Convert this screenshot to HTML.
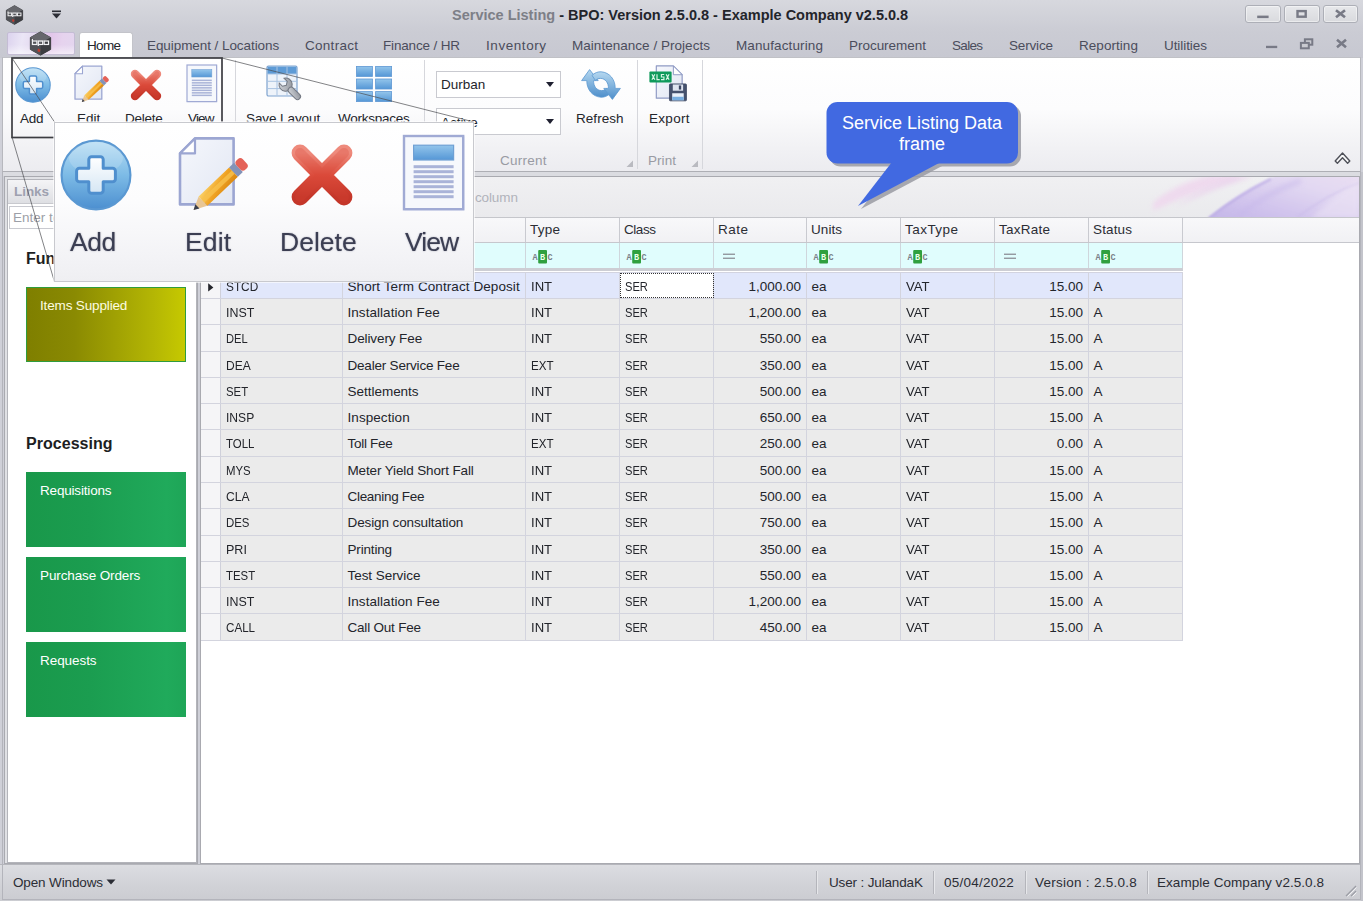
<!DOCTYPE html>
<html><head><meta charset="utf-8"><title>Service Listing</title>
<style>
*{box-sizing:border-box;margin:0;padding:0}
html,body{width:1363px;height:901px;overflow:hidden}
body{font-family:"Liberation Sans",sans-serif;font-size:13px;color:#23252b;background:#cfd0d8;position:relative}
.abs,.t{position:absolute}
.t{white-space:nowrap;line-height:16px}
svg{position:absolute;overflow:visible}
#title{left:0;top:0;width:1363px;height:31px;background:linear-gradient(#d7d8de,#cbccd4)}
#ttext{left:452px;top:6.5px;font-weight:bold;font-size:14.5px;color:#23252b}
#ttext span{color:#7d7f87}
.wbtn{top:5px;height:18px;border:1px solid #adafb7;border-radius:3px;background:linear-gradient(#e7e8eb,#d9dade);box-shadow:inset 0 0 0 1px rgba(255,255,255,.45)}
#tabs{left:0;top:31px;width:1363px;height:27px;background:linear-gradient(#cbccd4,#c7c8d1)}
.tab{top:38px;color:#4b4d5c;font-size:13.5px}
#appbtn{left:7px;top:32px;width:68px;height:23px;border:1px solid #c4bcd4;border-radius:2px;background:linear-gradient(#ffffff00 55%,#ffffff88 100%),linear-gradient(100deg,#dcd3ee 0%,#ebe6f6 22%,#e4d9f0 40%,#e2c6ea 62%,#e6d3ee 80%,#e4d6ef 100%)}
#hometab{left:79px;top:32px;width:54px;height:27px;background:#fff;border-radius:3px 3px 0 0;border:1px solid #c3c4ca;border-bottom:none}
#ribbon{left:2px;top:57px;width:1359px;height:115px;background:linear-gradient(#ffffff 0%,#fcfcfd 45%,#f1f1f4 80%,#ececf0 100%);border:1px solid #b7b8be;border-top-color:#c0c1c6;border-bottom:1px solid #aeafb5;box-shadow:0 1px 0 #c3c4c9}
.sep{top:60px;width:1px;height:109px;background:#d6d7dc}
.rl{top:111px;color:#23252b;font-size:13.5px}
.gl{top:153px;color:#999ba3;font-size:13.5px}
.combo{left:436px;width:125px;height:27px;background:#fff;border:1px solid #c9cad0}
.combo b{position:absolute;right:6px;top:10px;border:4.5px solid transparent;border-top:5px solid #1f2030;border-bottom:none;width:0;height:0}
#leftp{left:4px;top:176px;width:194px;height:688px;border:1px solid #a9aab0;background:#e0e1e5}
#leftin{left:7px;top:179px;width:190px;height:684px;background:#fff;border:1px solid #b3b4ba}
#linkshd{left:8px;top:180px;width:188px;height:24px;background:linear-gradient(#f4f4f6,#dedfe3);border-bottom:1px solid #c8c9ce}
#search{left:9px;top:206px;width:186px;height:23px;border:1px solid #c9cad0;background:#fff}
.hd{font-weight:bold;font-size:16px;color:#1d1e22;left:26px}
.tile{left:26px;width:160px;height:75px;color:#fff}
.tile .t{color:#fff}
.green{background:linear-gradient(90deg,#19984a 0%,#1b9d50 40%,#20aa5b 88%,#1ea557 100%)}
.olive{background:linear-gradient(90deg,#7f7f00 0%,#8a8a02 30%,#b4b604 80%,#c6c900 100%);border:1px solid #2f9c3c}
#mainp{left:200px;top:176px;width:1160px;height:688px;background:#fff;border:1px solid #a9aab0}
#gpanel{left:201px;top:177px;width:1158px;height:41px;background:linear-gradient(#f0f0f2,#eaeaed);border-bottom:1px solid #c5c6cb;overflow:hidden}
#ghead{left:201px;top:218px;width:1158px;height:25px;background:linear-gradient(#f8f8fa,#f1f1f4);border-bottom:1px solid #c6c7cd}
.hsep{top:218px;width:1px;height:24px;background:#c9cad0}
.ht{top:221.5px;color:#2b2d35;font-size:13.5px}
#gfilt{left:201px;top:243px;width:982px;height:28px;background:#e0fdfd;border-bottom:3px solid #cdced4;border-right:1px solid #cfd0d6}
.fsep{top:243px;width:1px;height:25px;background:#cfd6dc}
#grid{position:absolute;left:0;top:0}
.row{position:absolute;left:201px;width:982px;background:#ebebeb;border-bottom:1px solid #d3d4de}
.row:before{content:"";position:absolute;left:0;top:0;width:19px;height:100%;background:#f5f5f7;border-right:1px solid #cfd0da}
.row.sel{background:#e1e7fb;border-top:1px solid #d2d3df}
.row.sel:before{background:#f5f5f7}
.c{position:absolute;top:0;bottom:0;padding:5.5px 0 0 4.5px;border-right:1px solid #d3d4de;white-space:nowrap;line-height:16px;font-size:13.5px;color:#23252b;margin-left:-201px;overflow:hidden}
.c.num{text-align:right;padding-right:5px}
.c.focus{background:#fff;outline:1px dotted #333;outline-offset:-1px}
#status{left:0;top:864px;width:1363px;height:37px;background:linear-gradient(#dcdde1 0%,#d2d3d8 50%,#cbccd1 100%);border-top:1px solid #b5b6bc}
.st{top:874.5px;color:#2b2d35;font-size:13.5px}
.ssep{top:871px;width:1px;height:23px;background:#b4b5bb;box-shadow:1px 0 0 #e6e7ea}
.pl{top:226px;font-size:26.5px;line-height:32px;color:#3b3e52;text-shadow:0 0 1.5px rgba(60,62,90,.55)}
.c i{display:inline-block;font-style:normal;transform-origin:0 50%}
#frameL{left:2px;top:172px;width:1px;height:728px;background:#b3b4bb}
#frameB{left:3px;top:899px;width:1358px;height:1px;background:#b3b4bb}
#frameR{left:1360px;top:172px;width:1px;height:728px;background:#b3b4bb}
#gap1{left:3px;top:172px;width:1357px;height:4px;background:#dbdce1}
#stripR{left:1361px;top:172px;width:2px;height:729px;background:#c3c4cb}

</style></head><body>
<svg width="0" height="0" style="position:absolute">
<defs>
<linearGradient id="gAdd" x1="0" y1="0" x2="0" y2="1"><stop offset="0" stop-color="#b9def4"/><stop offset="0.5" stop-color="#7dbbe6"/><stop offset="1" stop-color="#4c8fd0"/></linearGradient>
<linearGradient id="gPlus" x1="0" y1="0" x2="0" y2="1"><stop offset="0" stop-color="#ffffff"/><stop offset="1" stop-color="#d5e6f4"/></linearGradient>
<linearGradient id="gDel" x1="0" y1="0" x2="0" y2="1"><stop offset="0" stop-color="#ee8a7c"/><stop offset="0.5" stop-color="#dc4c3c"/><stop offset="1" stop-color="#c43629"/></linearGradient>
<linearGradient id="gPage" x1="0" y1="0" x2="1" y2="1"><stop offset="0" stop-color="#f5f7fc"/><stop offset="1" stop-color="#e2e7f3"/></linearGradient>
<linearGradient id="gPen" x1="0" y1="0" x2="1" y2="1"><stop offset="0" stop-color="#fbd36a"/><stop offset="0.5" stop-color="#f0a324"/><stop offset="1" stop-color="#d9860f"/></linearGradient>
<linearGradient id="gBlue" x1="0" y1="0" x2="0" y2="1"><stop offset="0" stop-color="#93c5eb"/><stop offset="1" stop-color="#5597d6"/></linearGradient>
<linearGradient id="gRef" x1="0" y1="0" x2="0" y2="1"><stop offset="0" stop-color="#b5d8f0"/><stop offset="1" stop-color="#4f8fcb"/></linearGradient>
<linearGradient id="gWr" x1="0" y1="0" x2="1" y2="1"><stop offset="0" stop-color="#d5d8dd"/><stop offset="1" stop-color="#8d9199"/></linearGradient>
<symbol id="iAdd" viewBox="0 0 40 40">
 <circle cx="20" cy="20" r="17.2" fill="url(#gAdd)" stroke="#5a98d2" stroke-width="1.1"/>
 <ellipse cx="20" cy="11.5" rx="13.5" ry="8" fill="#ffffff" opacity=".16"/>
 <path d="M17.8 10.9h4.4a1.4 1.4 0 0 1 1.4 1.4v4.3h4.7a1.4 1.4 0 0 1 1.4 1.4v4a1.4 1.4 0 0 1-1.4 1.4h-4.7v4.3a1.4 1.4 0 0 1-1.4 1.4h-4.4a1.4 1.4 0 0 1-1.4-1.4v-4.3h-4.7a1.4 1.4 0 0 1-1.4-1.4v-4a1.4 1.4 0 0 1 1.4-1.4h4.7v-4.3a1.4 1.4 0 0 1 1.4-1.4z" fill="url(#gPlus)" stroke="#4f8fce" stroke-width="1.5" stroke-linejoin="round"/>
</symbol>
<symbol id="iEdit" viewBox="0 0 40 40">
 <path d="M11.5 2.2H30.8V35.2H4V9.7z" fill="url(#gPage)" stroke="#9ca6d2" stroke-width="1.3" stroke-linejoin="round"/>
 <path d="M11.5 2.2V9.7H4z" fill="#fff" stroke="#9ca6d2" stroke-width="1.1" stroke-linejoin="round"/>
 <g transform="translate(10.8 38) rotate(-43.5)">
  <path d="M0 0L6.5 -3.2V3.2z" fill="#e9c694"/>
  <path d="M0 0L2.6 -1.5V1.5z" fill="#3b3f4c"/>
  <rect x="6.5" y="-3.2" width="21" height="6.4" fill="url(#gPen)"/>
  <rect x="6.5" y="-1.2" width="21" height="2.2" fill="#f7c24e" opacity=".8"/>
  <rect x="27.5" y="-3.2" width="3.4" height="6.4" fill="#8393b8"/>
  <rect x="30.9" y="-3.2" width="4.4" height="6.4" rx="1.8" fill="#e46258"/>
 </g>
</symbol>
<symbol id="iDel" viewBox="0 0 40 40">
 <path d="M9 9L31 31M31 9L9 31" stroke="url(#gDel)" stroke-width="8.4" stroke-linecap="round" fill="none"/>
 <path d="M9 9L31 31M31 9L9 31" stroke="#d84434" stroke-width="5" stroke-linecap="round" fill="none" opacity=".25"/>
</symbol>
<symbol id="iView" viewBox="0 0 40 40">
 <rect x="5.2" y="1.2" width="30" height="37" fill="#b5bddc" opacity=".5"/>
 <rect x="5" y="1" width="29.6" height="36.6" fill="#f6f8fc" stroke="#a0aad4" stroke-width="1.2"/>
 <rect x="9.8" y="5.6" width="20" height="7.4" fill="url(#gBlue)" stroke="#6fa0d4" stroke-width=".6"/>
 <g fill="#a9b3d8">
  <rect x="9.8" y="15.6" width="20" height="1.5"/><rect x="9.8" y="18.1" width="20" height="1.5"/>
  <rect x="9.8" y="20.6" width="20" height="1.5"/><rect x="9.8" y="23.1" width="20" height="1.5"/>
  <rect x="9.8" y="25.6" width="20" height="1.5"/><rect x="9.8" y="28.1" width="20" height="1.5"/>
  <rect x="9.8" y="30.6" width="20" height="1.5"/>
 </g>
</symbol>
<symbol id="iSave" viewBox="0 0 40 40">
 <rect x="2" y="2" width="30" height="30" rx="1.5" fill="#eef3fa" stroke="#7ea3cf" stroke-width="1.2"/>
 <rect x="2.6" y="2.6" width="28.8" height="7.4" fill="#5e9bd6"/>
 <path d="M12 2.6V31.4M22 2.6V31.4M2.6 10H31.4M2.6 17.3H31.4M2.6 24.6H31.4" stroke="#a9c3e2" stroke-width="1"/>
 <g transform="translate(20.5 20.5) rotate(-45)">
  <path d="M-3.4 -5.5a6.6 6.6 0 1 0 6.8 0v4.6l-3.4 2l-3.4-2z" fill="url(#gWr)" stroke="#747983" stroke-width="1"/>
  <rect x="-3" y="5" width="6" height="15" rx="3" fill="url(#gWr)" stroke="#747983" stroke-width="1"/>
 </g>
</symbol>
<symbol id="iWork" viewBox="0 0 40 40">
 <g fill="url(#gBlue)" stroke="#5f98d4" stroke-width=".8">
  <rect x="2.4" y="2.4" width="16" height="10"/><rect x="21.6" y="2.4" width="16" height="10"/>
  <rect x="2.4" y="15" width="16" height="10"/><rect x="21.6" y="15" width="16" height="10"/>
  <rect x="2.4" y="27.6" width="16" height="10"/><rect x="21.6" y="27.6" width="16" height="10"/>
 </g>
</symbol>
<symbol id="iRef" viewBox="0 0 40 31">
 <g fill="url(#gRef)" stroke="#5c98d0" stroke-width=".8" stroke-linejoin="round">
  <path d="M8.6 0.6L17.2 11.6H12.6C12.4 17.2 15.6 21.4 20.4 21.6C22.6 21.6 24.4 20.8 25.6 19.6L29 24.6C26.4 27.2 23.2 28.4 19.8 28.2C11.4 27.6 5.6 20.4 5.8 11.6H0.6z"/>
  <path d="M31.4 30.4L22.8 19.4H27.4C27.6 13.8 24.4 9.6 19.6 9.4C17.4 9.4 15.6 10.2 14.4 11.4L11 6.4C13.6 3.8 16.8 2.6 20.2 2.8C28.6 3.4 34.4 10.6 34.2 19.4H39.4z"/>
 </g>
</symbol>
<symbol id="iExp" viewBox="0 0 40 40">
 <path d="M7.5 2H25L34 11V35H7.5z" fill="url(#gPage)" stroke="#8f9ac4" stroke-width="1.2" stroke-linejoin="round"/>
 <path d="M25 2V11H34z" fill="#fff" stroke="#8f9ac4" stroke-width="1" stroke-linejoin="round"/>
 <rect x="0.4" y="7.6" width="22.8" height="11.4" rx="1" fill="#0f9a5b"/>
 <path d="M3 10.5l3 5.6M6 10.5l-3 5.6M8.2 10.5v5.6h2.8M15.6 10.8h-2.9v2.5h2.6v2.8h-3M17.6 10.5l3 5.6M20.600000000000001 10.5l-3 5.6" stroke="#d9f5e6" stroke-width="1.2" fill="none"/>
 <rect x="21" y="20.4" width="17.4" height="17.4" rx="1" fill="#46526e" stroke="#39445f" stroke-width=".8"/>
 <rect x="24.4" y="21" width="10.6" height="6.4" fill="#dfe5f0"/>
 <rect x="30.6" y="22" width="2.4" height="4.2" fill="#3a4560"/>
 <rect x="23.8" y="30" width="11.8" height="7.2" fill="#eaf1fa"/>
 <rect x="23.8" y="33.6" width="11.8" height="3.6" fill="#78aee0"/>
</symbol>
<symbol id="iHex" viewBox="0 0 24 26">
 <path d="M12 0.8L22.6 6.8V19.2L12 25.2L1.4 19.2V6.8z" fill="#47484c" stroke="#3a3b3f" stroke-width=".8"/>
 <path d="M12 0.8L22.6 6.8L12 12.8L1.4 6.8z" fill="#66676c"/>
 <path d="M22.6 6.8V19.2L12 25.2V12.8z" fill="#3c3d41"/>
 <path d="M1.4 6.8L12 12.8V25.2L1.4 19.2z" fill="#515257"/>
 <g fill="none" stroke="#f2f2f4" stroke-width="1.3"><rect x="3.6" y="10.4" width="4.6" height="3.6"/><path d="M3.6 10.4V8.2"/><rect x="9.7" y="10.4" width="4.6" height="3.6"/><path d="M9.7 14V15.6"/><rect x="15.8" y="10.4" width="4.6" height="3.6"/></g>
 <path d="M9.4 18.2l2.6 1.2l-1 2.6l-2.200000000000001-1z" fill="#c23a30"/>
</symbol>
</defs>
</svg>
<!-- title bar -->
<div id="title" class="abs"></div>
<svg style="left:5px;top:4.5px" width="19" height="20"><use href="#iHex" width="19" height="20"/></svg>
<svg style="left:51px;top:10px" width="11" height="9"><rect x="1" y="0.5" width="9" height="1.6" fill="#2b2d35"/><path d="M1 3.6h9L5.5 8.4z" fill="#2b2d35"/></svg>
<div id="ttext" class="t"><span>Service Listing</span> - BPO: Version 2.5.0.8 - Example Company v2.5.0.8</div>
<div class="abs wbtn" style="left:1245px;width:36px"></div>
<div class="abs wbtn" style="left:1284px;width:36px"></div>
<div class="abs wbtn" style="left:1323px;width:35px"></div>
<svg style="left:1245px;top:0px" width="118" height="30">
 <rect x="12.2" y="15.6" width="11.4" height="2.5" fill="#787a86"/>
 <rect x="52.5" y="11.1" width="8.2" height="5.6" fill="none" stroke="#787a86" stroke-width="2.4"/>
 <path d="M91 10.2l9 7M100 10.2l-9 7" stroke="#787a86" stroke-width="2.7"/>
</svg>
<!-- tabs -->
<div id="tabs" class="abs"></div>
<div id="appbtn" class="abs"></div>
<svg style="left:29px;top:31px" width="23" height="25"><use href="#iHex" width="23" height="25"/></svg>
<div id="hometab" class="abs"></div>
<div class="t tab" style="left:87px;color:#23252b;letter-spacing:-0.67px">Home</div>
<div class="t tab" style="left:147px;letter-spacing:-0.07px">Equipment / Locations</div>
<div class="t tab" style="left:305px;letter-spacing:0.28px">Contract</div>
<div class="t tab" style="left:383px;letter-spacing:-0.16px">Finance / HR</div>
<div class="t tab" style="left:486px;letter-spacing:0.56px">Inventory</div>
<div class="t tab" style="left:572px;letter-spacing:0.03px">Maintenance / Projects</div>
<div class="t tab" style="left:736px;letter-spacing:0.12px">Manufacturing</div>
<div class="t tab" style="left:849px;letter-spacing:-0.03px">Procurement</div>
<div class="t tab" style="left:952px;letter-spacing:-0.69px">Sales</div>
<div class="t tab" style="left:1009px;letter-spacing:-0.17px">Service</div>
<div class="t tab" style="left:1079px;letter-spacing:0.05px">Reporting</div>
<div class="t tab" style="left:1164px;letter-spacing:-0.07px">Utilities</div>
<svg style="left:1262px;top:36px" width="95" height="18">
 <rect x="4" y="9.8" width="11.2" height="2.3" fill="#787a86"/>
 <rect x="42.9" y="3.3" width="7.4" height="5.4" fill="#c9cad0" stroke="#787a86" stroke-width="2"/>
 <rect x="38.9" y="6.9" width="7.9" height="5.4" fill="#c9cad0" stroke="#787a86" stroke-width="2"/>
 <path d="M75 3.8l9 7.4M84 3.8l-9 7.4" stroke="#787a86" stroke-width="2.6"/>
</svg>
<!-- ribbon -->
<div id="ribbon" class="abs"></div>
<div class="abs sep" style="left:235px"></div>
<div class="abs sep" style="left:424px"></div>
<div class="abs sep" style="left:637px"></div>
<div class="abs sep" style="left:702px"></div>
<svg style="left:13px;top:64.5px" width="40" height="40"><use href="#iAdd" width="40" height="40"/></svg>
<svg style="left:71px;top:64px" width="40" height="40"><use href="#iEdit" width="40" height="40"/></svg>
<svg style="left:126px;top:64.5px" width="40" height="40"><use href="#iDel" width="40" height="40"/></svg>
<svg style="left:182px;top:64px" width="40" height="40"><use href="#iView" width="40" height="40"/></svg>
<div class="t rl" style="left:20px;letter-spacing:-0.22px">Add</div>
<div class="t rl" style="left:77px;letter-spacing:-0.03px">Edit</div>
<div class="t rl" style="left:125px;letter-spacing:-0.25px">Delete</div>
<div class="t rl" style="left:188px;letter-spacing:-0.87px">View</div>
<svg style="left:265px;top:64px" width="40" height="40"><use href="#iSave" width="40" height="40"/></svg>
<svg style="left:354px;top:64px" width="40" height="40"><use href="#iWork" width="40" height="40"/></svg>
<div class="t rl" style="left:246px;letter-spacing:-0.09px">Save Layout</div>
<div class="t rl" style="left:338px;letter-spacing:-0.26px">Workspaces</div>
<div class="abs combo" style="top:71px"><b></b></div>
<div class="abs combo" style="top:108px"><b></b></div>
<div class="t" style="left:441px;top:77px;font-size:13.5px">Durban</div>
<div class="t" style="left:441px;top:115px;font-size:13.5px">Active</div>
<svg style="left:581px;top:69px" width="40" height="31"><use href="#iRef" width="40" height="31"/></svg>
<div class="t rl" style="left:576px;letter-spacing:0.05px">Refresh</div>
<svg style="left:649px;top:64px" width="39" height="39"><use href="#iExp" width="39" height="39"/></svg>
<div class="t rl" style="left:649px;letter-spacing:0.30px">Export</div>
<div class="t gl" style="left:500px;letter-spacing:0.23px">Current</div>
<div class="t gl" style="left:648px;letter-spacing:0.06px">Print</div>
<svg style="left:626px;top:160px" width="8" height="8"><path d="M7 0.5V7H0.5z" fill="#b9bac0"/></svg>
<svg style="left:691px;top:160px" width="8" height="8"><path d="M7 0.5V7H0.5z" fill="#b9bac0"/></svg>
<svg style="left:1334px;top:151px" width="18" height="14"><path d="M1.2 10L8.500000000000002 2L15.8 10L13.6 12.200000000000001L8.500000000000002 6.800000000000001L3.4000000000000004 12.200000000000001z" fill="#fbfbfc" stroke="#4e5058" stroke-width="1.4" stroke-linejoin="round"/></svg>
<div id="gap1" class="abs"></div>
<!-- left panel -->
<div id="leftp" class="abs"></div>
<div id="leftin" class="abs"></div>
<div id="linkshd" class="abs"></div>
<div class="t" style="left:14px;top:183.5px;font-weight:bold;color:#9ea1b0;font-size:13.5px;letter-spacing:-0.06px">Links</div>
<div id="search" class="abs"></div>
<div class="t" style="left:13px;top:209.5px;color:#9d9fa7;font-size:13.5px">Enter text to search...</div>
<div class="t hd" style="top:250.5px">Functions</div>
<div class="abs tile olive" style="top:287px"><div class="t" style="left:13px;top:10px;font-size:13.5px;color:#fdfde0;letter-spacing:-0.15px">Items Supplied</div></div>
<div class="t hd" style="top:435.5px;letter-spacing:0.04px">Processing</div>
<div class="abs tile green" style="top:472px"><div class="t" style="left:14px;top:11px;font-size:13.5px;letter-spacing:-0.18px">Requisitions</div></div>
<div class="abs tile green" style="top:557px"><div class="t" style="left:14px;top:11px;font-size:13.5px;letter-spacing:-0.12px">Purchase Orders</div></div>
<div class="abs tile green" style="top:642px"><div class="t" style="left:14px;top:11px;font-size:13.5px;letter-spacing:-0.06px">Requests</div></div>
<!-- main panel -->
<div id="mainp" class="abs"></div>
<div id="gpanel" class="abs">
 <svg style="left:0;top:0" width="1158" height="41" viewBox="0 0 1158 41">
  <defs>
   <linearGradient id="sw2" x1="0" y1="1" x2="1" y2="0"><stop offset="0" stop-color="#c3b5e8"/><stop offset=".35" stop-color="#d2c5ed"/><stop offset=".7" stop-color="#e2d8f2"/><stop offset="1" stop-color="#e9def3"/></linearGradient>
   <filter id="bl" x="-10%" y="-60%" width="120%" height="220%"><feGaussianBlur stdDeviation="2.5"/></filter>
   <filter id="bl2" x="-10%" y="-60%" width="120%" height="220%"><feGaussianBlur stdDeviation="1.2"/></filter>
  </defs>
  <path d="M952 34C985 18 1015 8 1050 -2H1010C985 4 965 14 952 26z" fill="#efd8ee" opacity=".9" filter="url(#bl)"/>
  <path d="M975 30C1000 18 1025 8 1052 0H1030C1008 8 990 18 975 30z" fill="#ead2ec" opacity=".7" filter="url(#bl)"/>
  <path d="M1006 42C1030 22 1052 8 1074 -1H1160V42z" fill="url(#sw2)" filter="url(#bl2)"/>
  <path d="M1008 41C1030 24 1050 12 1070 2" stroke="#b9a9e4" stroke-width="2.5" fill="none" opacity=".7" filter="url(#bl2)"/>
  <path d="M1035 41C1055 24 1080 10 1100 4" stroke="#c6b7ea" stroke-width="5" fill="none" opacity=".55" filter="url(#bl)"/>
  <path d="M1095 41C1115 26 1135 14 1158 6" stroke="#c9bbe9" stroke-width="1.6" fill="none" opacity=".6" filter="url(#bl2)"/>
  <path d="M1110 41C1128 24 1144 12 1158 2V41z" fill="#ece4f5" opacity=".55" filter="url(#bl)"/>
 </svg>
</div>
<div class="t" style="left:214px;top:190px;color:#b1b3bb;font-size:13.5px;letter-spacing:-0.11px">Drag a column header here to group by that column</div>
<div id="ghead" class="abs"></div>
<div id="gfilt" class="abs"></div>
<div class="abs hsep" style="left:220px"></div>
<div class="abs fsep" style="left:220px"></div>
<div class="abs hsep" style="left:342px"></div>
<div class="abs fsep" style="left:342px"></div>
<div class="abs hsep" style="left:525px"></div>
<div class="abs fsep" style="left:525px"></div>
<div class="abs hsep" style="left:619px"></div>
<div class="abs fsep" style="left:619px"></div>
<div class="abs hsep" style="left:713px"></div>
<div class="abs fsep" style="left:713px"></div>
<div class="abs hsep" style="left:806px"></div>
<div class="abs fsep" style="left:806px"></div>
<div class="abs hsep" style="left:900px"></div>
<div class="abs fsep" style="left:900px"></div>
<div class="abs hsep" style="left:994px"></div>
<div class="abs fsep" style="left:994px"></div>
<div class="abs hsep" style="left:1088px"></div>
<div class="abs fsep" style="left:1088px"></div>
<div class="abs hsep" style="left:1182px"></div>
<div class="abs fsep" style="left:1182px"></div>
<div class="t ht" style="left:226px">Code</div>
<div class="t ht" style="left:347px">Description</div>
<div class="t ht" style="left:530px;letter-spacing:0.24px">Type</div>
<div class="t ht" style="left:624px;letter-spacing:-0.44px">Class</div>
<div class="t ht" style="left:718px;letter-spacing:0.49px">Rate</div>
<div class="t ht" style="left:811px;letter-spacing:0.06px">Units</div>
<div class="t ht" style="left:905px;letter-spacing:0.46px">TaxType</div>
<div class="t ht" style="left:999px;letter-spacing:0.25px">TaxRate</div>
<div class="t ht" style="left:1093px;letter-spacing:0.14px">Status</div>
<svg style="left:227.5px;top:249.5px" width="20" height="14"><rect x="6.2" y="0" width="8.8" height="13.6" rx="1" fill="#2fa03f"/><g font-family="Liberation Mono" font-size="8.5" font-weight="bold"><text x="0.4" y="10" fill="#7a8088">A</text><text x="8" y="10" fill="#e9ffe9">B</text><text x="15.4" y="10" fill="#7a8088">C</text></g></svg>
<svg style="left:348.5px;top:249.5px" width="20" height="14"><rect x="6.2" y="0" width="8.8" height="13.6" rx="1" fill="#2fa03f"/><g font-family="Liberation Mono" font-size="8.5" font-weight="bold"><text x="0.4" y="10" fill="#7a8088">A</text><text x="8" y="10" fill="#e9ffe9">B</text><text x="15.4" y="10" fill="#7a8088">C</text></g></svg>
<svg style="left:531.5px;top:249.5px" width="20" height="14"><rect x="6.2" y="0" width="8.8" height="13.6" rx="1" fill="#2fa03f"/><g font-family="Liberation Mono" font-size="8.5" font-weight="bold"><text x="0.4" y="10" fill="#7a8088">A</text><text x="8" y="10" fill="#e9ffe9">B</text><text x="15.4" y="10" fill="#7a8088">C</text></g></svg>
<svg style="left:625.5px;top:249.5px" width="20" height="14"><rect x="6.2" y="0" width="8.8" height="13.6" rx="1" fill="#2fa03f"/><g font-family="Liberation Mono" font-size="8.5" font-weight="bold"><text x="0.4" y="10" fill="#7a8088">A</text><text x="8" y="10" fill="#e9ffe9">B</text><text x="15.4" y="10" fill="#7a8088">C</text></g></svg>
<svg style="left:723px;top:253px" width="12" height="7"><rect x="0" y="0.6" width="12" height="1.3" fill="#8d9097"/><rect x="0" y="4.6" width="12" height="1.3" fill="#8d9097"/></svg>
<svg style="left:812.5px;top:249.5px" width="20" height="14"><rect x="6.2" y="0" width="8.8" height="13.6" rx="1" fill="#2fa03f"/><g font-family="Liberation Mono" font-size="8.5" font-weight="bold"><text x="0.4" y="10" fill="#7a8088">A</text><text x="8" y="10" fill="#e9ffe9">B</text><text x="15.4" y="10" fill="#7a8088">C</text></g></svg>
<svg style="left:906.5px;top:249.5px" width="20" height="14"><rect x="6.2" y="0" width="8.8" height="13.6" rx="1" fill="#2fa03f"/><g font-family="Liberation Mono" font-size="8.5" font-weight="bold"><text x="0.4" y="10" fill="#7a8088">A</text><text x="8" y="10" fill="#e9ffe9">B</text><text x="15.4" y="10" fill="#7a8088">C</text></g></svg>
<svg style="left:1004px;top:253px" width="12" height="7"><rect x="0" y="0.6" width="12" height="1.3" fill="#8d9097"/><rect x="0" y="4.6" width="12" height="1.3" fill="#8d9097"/></svg>
<svg style="left:1094.5px;top:249.5px" width="20" height="14"><rect x="6.2" y="0" width="8.8" height="13.6" rx="1" fill="#2fa03f"/><g font-family="Liberation Mono" font-size="8.5" font-weight="bold"><text x="0.4" y="10" fill="#7a8088">A</text><text x="8" y="10" fill="#e9ffe9">B</text><text x="15.4" y="10" fill="#7a8088">C</text></g></svg>

<div id="status" class="abs"></div><div id="frameL" class="abs"></div><div id="frameB" class="abs"></div><div id="frameR" class="abs"></div><div id="stripR" class="abs"></div>
<div class="t st" style="left:13px;letter-spacing:-0.14px">Open Windows</div>
<svg style="left:106px;top:879px" width="10" height="6"><path d="M0.5 0.5h9L5 5.5z" fill="#2b2d35"/></svg>
<div class="abs ssep" style="left:816px"></div>
<div class="abs ssep" style="left:933px"></div>
<div class="abs ssep" style="left:1025px"></div>
<div class="abs ssep" style="left:1147px"></div>
<div class="t st" style="left:829px;letter-spacing:-0.15px">User : JulandaK</div>
<div class="t st" style="left:944px;letter-spacing:0.24px">05/04/2022</div>
<div class="t st" style="left:1035px;letter-spacing:0.26px">Version : 2.5.0.8</div>
<div class="t st" style="left:1157px;letter-spacing:0.05px">Example Company v2.5.0.8</div>
<svg style="left:1343px;top:883px" width="14" height="14"><path d="M13 3L3 13M13 8L8 13" stroke="#9c9ea6" stroke-width="1.3"/><path d="M13.500000000000002 4.5L4.5 13.5M13.5 9.5L9.5 13.5" stroke="#f2f2f4" stroke-width="1"/></svg>
<div id="grid">
<div class="row sel" style="top:272px;height:27px"><span class="c k0" style="left:221px;width:122px"><i style="transform:scaleX(0.876)">STCD</i></span><span class="c k1" style="left:343px;width:183px;letter-spacing:0.08px">Short Term Contract Deposit</span><span class="c k2" style="left:526px;width:94px"><i style="transform:scaleX(0.970)">INT</i></span><span class="c focus k3" style="left:620px;width:94px"><i style="transform:scaleX(0.825)">SER</i></span><span class="c num k4" style="left:714px;width:93px">1,000.00</span><span class="c k5" style="left:807px;width:94px">ea</span><span class="c k6" style="left:901px;width:94px"><i style="transform:scaleX(0.973)">VAT</i></span><span class="c num k7" style="left:995px;width:94px">15.00</span><span class="c k8" style="left:1089px;width:94px">A</span></div>
<div class="row" style="top:299px;height:26px"><span class="c k0" style="left:221px;width:122px"><i style="transform:scaleX(0.920)">INST</i></span><span class="c k1" style="left:343px;width:183px;letter-spacing:0.05px">Installation Fee</span><span class="c k2" style="left:526px;width:94px"><i style="transform:scaleX(0.970)">INT</i></span><span class="c k3" style="left:620px;width:94px"><i style="transform:scaleX(0.825)">SER</i></span><span class="c num k4" style="left:714px;width:93px">1,200.00</span><span class="c k5" style="left:807px;width:94px">ea</span><span class="c k6" style="left:901px;width:94px"><i style="transform:scaleX(0.973)">VAT</i></span><span class="c num k7" style="left:995px;width:94px">15.00</span><span class="c k8" style="left:1089px;width:94px">A</span></div>
<div class="row" style="top:325px;height:27px"><span class="c k0" style="left:221px;width:122px"><i style="transform:scaleX(0.822)">DEL</i></span><span class="c k1" style="left:343px;width:183px;letter-spacing:-0.10px">Delivery Fee</span><span class="c k2" style="left:526px;width:94px"><i style="transform:scaleX(0.970)">INT</i></span><span class="c k3" style="left:620px;width:94px"><i style="transform:scaleX(0.825)">SER</i></span><span class="c num k4" style="left:714px;width:93px">550.00</span><span class="c k5" style="left:807px;width:94px">ea</span><span class="c k6" style="left:901px;width:94px"><i style="transform:scaleX(0.973)">VAT</i></span><span class="c num k7" style="left:995px;width:94px">15.00</span><span class="c k8" style="left:1089px;width:94px">A</span></div>
<div class="row" style="top:352px;height:26px"><span class="c k0" style="left:221px;width:122px"><i style="transform:scaleX(0.890)">DEA</i></span><span class="c k1" style="left:343px;width:183px;letter-spacing:-0.20px">Dealer Service Fee</span><span class="c k2" style="left:526px;width:94px"><i style="transform:scaleX(0.857)">EXT</i></span><span class="c k3" style="left:620px;width:94px"><i style="transform:scaleX(0.825)">SER</i></span><span class="c num k4" style="left:714px;width:93px">350.00</span><span class="c k5" style="left:807px;width:94px">ea</span><span class="c k6" style="left:901px;width:94px"><i style="transform:scaleX(0.973)">VAT</i></span><span class="c num k7" style="left:995px;width:94px">15.00</span><span class="c k8" style="left:1089px;width:94px">A</span></div>
<div class="row" style="top:378px;height:26px"><span class="c k0" style="left:221px;width:122px"><i style="transform:scaleX(0.841)">SET</i></span><span class="c k1" style="left:343px;width:183px;letter-spacing:-0.02px">Settlements</span><span class="c k2" style="left:526px;width:94px"><i style="transform:scaleX(0.970)">INT</i></span><span class="c k3" style="left:620px;width:94px"><i style="transform:scaleX(0.825)">SER</i></span><span class="c num k4" style="left:714px;width:93px">500.00</span><span class="c k5" style="left:807px;width:94px">ea</span><span class="c k6" style="left:901px;width:94px"><i style="transform:scaleX(0.973)">VAT</i></span><span class="c num k7" style="left:995px;width:94px">15.00</span><span class="c k8" style="left:1089px;width:94px">A</span></div>
<div class="row" style="top:404px;height:26px"><span class="c k0" style="left:221px;width:122px"><i style="transform:scaleX(0.895)">INSP</i></span><span class="c k1" style="left:343px;width:183px;letter-spacing:0.07px">Inspection</span><span class="c k2" style="left:526px;width:94px"><i style="transform:scaleX(0.970)">INT</i></span><span class="c k3" style="left:620px;width:94px"><i style="transform:scaleX(0.825)">SER</i></span><span class="c num k4" style="left:714px;width:93px">650.00</span><span class="c k5" style="left:807px;width:94px">ea</span><span class="c k6" style="left:901px;width:94px"><i style="transform:scaleX(0.973)">VAT</i></span><span class="c num k7" style="left:995px;width:94px">15.00</span><span class="c k8" style="left:1089px;width:94px">A</span></div>
<div class="row" style="top:430px;height:27px"><span class="c k0" style="left:221px;width:122px"><i style="transform:scaleX(0.847)">TOLL</i></span><span class="c k1" style="left:343px;width:183px;letter-spacing:-0.28px">Toll Fee</span><span class="c k2" style="left:526px;width:94px"><i style="transform:scaleX(0.857)">EXT</i></span><span class="c k3" style="left:620px;width:94px"><i style="transform:scaleX(0.825)">SER</i></span><span class="c num k4" style="left:714px;width:93px">250.00</span><span class="c k5" style="left:807px;width:94px">ea</span><span class="c k6" style="left:901px;width:94px"><i style="transform:scaleX(0.973)">VAT</i></span><span class="c num k7" style="left:995px;width:94px">0.00</span><span class="c k8" style="left:1089px;width:94px">A</span></div>
<div class="row" style="top:457px;height:26px"><span class="c k0" style="left:221px;width:122px"><i style="transform:scaleX(0.844)">MYS</i></span><span class="c k1" style="left:343px;width:183px;letter-spacing:-0.13px">Meter Yield Short Fall</span><span class="c k2" style="left:526px;width:94px"><i style="transform:scaleX(0.970)">INT</i></span><span class="c k3" style="left:620px;width:94px"><i style="transform:scaleX(0.825)">SER</i></span><span class="c num k4" style="left:714px;width:93px">500.00</span><span class="c k5" style="left:807px;width:94px">ea</span><span class="c k6" style="left:901px;width:94px"><i style="transform:scaleX(0.973)">VAT</i></span><span class="c num k7" style="left:995px;width:94px">15.00</span><span class="c k8" style="left:1089px;width:94px">A</span></div>
<div class="row" style="top:483px;height:26px"><span class="c k0" style="left:221px;width:122px"><i style="transform:scaleX(0.895)">CLA</i></span><span class="c k1" style="left:343px;width:183px;letter-spacing:-0.30px">Cleaning Fee</span><span class="c k2" style="left:526px;width:94px"><i style="transform:scaleX(0.970)">INT</i></span><span class="c k3" style="left:620px;width:94px"><i style="transform:scaleX(0.825)">SER</i></span><span class="c num k4" style="left:714px;width:93px">500.00</span><span class="c k5" style="left:807px;width:94px">ea</span><span class="c k6" style="left:901px;width:94px"><i style="transform:scaleX(0.973)">VAT</i></span><span class="c num k7" style="left:995px;width:94px">15.00</span><span class="c k8" style="left:1089px;width:94px">A</span></div>
<div class="row" style="top:509px;height:27px"><span class="c k0" style="left:221px;width:122px"><i style="transform:scaleX(0.846)">DES</i></span><span class="c k1" style="left:343px;width:183px;letter-spacing:-0.11px">Design consultation</span><span class="c k2" style="left:526px;width:94px"><i style="transform:scaleX(0.970)">INT</i></span><span class="c k3" style="left:620px;width:94px"><i style="transform:scaleX(0.825)">SER</i></span><span class="c num k4" style="left:714px;width:93px">750.00</span><span class="c k5" style="left:807px;width:94px">ea</span><span class="c k6" style="left:901px;width:94px"><i style="transform:scaleX(0.973)">VAT</i></span><span class="c num k7" style="left:995px;width:94px">15.00</span><span class="c k8" style="left:1089px;width:94px">A</span></div>
<div class="row" style="top:536px;height:26px"><span class="c k0" style="left:221px;width:122px"><i style="transform:scaleX(0.928)">PRI</i></span><span class="c k1" style="left:343px;width:183px;letter-spacing:-0.17px">Printing</span><span class="c k2" style="left:526px;width:94px"><i style="transform:scaleX(0.970)">INT</i></span><span class="c k3" style="left:620px;width:94px"><i style="transform:scaleX(0.825)">SER</i></span><span class="c num k4" style="left:714px;width:93px">350.00</span><span class="c k5" style="left:807px;width:94px">ea</span><span class="c k6" style="left:901px;width:94px"><i style="transform:scaleX(0.973)">VAT</i></span><span class="c num k7" style="left:995px;width:94px">15.00</span><span class="c k8" style="left:1089px;width:94px">A</span></div>
<div class="row" style="top:562px;height:26px"><span class="c k0" style="left:221px;width:122px"><i style="transform:scaleX(0.843)">TEST</i></span><span class="c k1" style="left:343px;width:183px;letter-spacing:-0.05px">Test Service</span><span class="c k2" style="left:526px;width:94px"><i style="transform:scaleX(0.970)">INT</i></span><span class="c k3" style="left:620px;width:94px"><i style="transform:scaleX(0.825)">SER</i></span><span class="c num k4" style="left:714px;width:93px">550.00</span><span class="c k5" style="left:807px;width:94px">ea</span><span class="c k6" style="left:901px;width:94px"><i style="transform:scaleX(0.973)">VAT</i></span><span class="c num k7" style="left:995px;width:94px">15.00</span><span class="c k8" style="left:1089px;width:94px">A</span></div>
<div class="row" style="top:588px;height:26px"><span class="c k0" style="left:221px;width:122px"><i style="transform:scaleX(0.920)">INST</i></span><span class="c k1" style="left:343px;width:183px;letter-spacing:0.05px">Installation Fee</span><span class="c k2" style="left:526px;width:94px"><i style="transform:scaleX(0.970)">INT</i></span><span class="c k3" style="left:620px;width:94px"><i style="transform:scaleX(0.825)">SER</i></span><span class="c num k4" style="left:714px;width:93px">1,200.00</span><span class="c k5" style="left:807px;width:94px">ea</span><span class="c k6" style="left:901px;width:94px"><i style="transform:scaleX(0.973)">VAT</i></span><span class="c num k7" style="left:995px;width:94px">15.00</span><span class="c k8" style="left:1089px;width:94px">A</span></div>
<div class="row" style="top:614px;height:27px"><span class="c k0" style="left:221px;width:122px"><i style="transform:scaleX(0.861)">CALL</i></span><span class="c k1" style="left:343px;width:183px;letter-spacing:-0.21px">Call Out Fee</span><span class="c k2" style="left:526px;width:94px"><i style="transform:scaleX(0.970)">INT</i></span><span class="c k3" style="left:620px;width:94px"><i style="transform:scaleX(0.825)">SER</i></span><span class="c num k4" style="left:714px;width:93px">450.00</span><span class="c k5" style="left:807px;width:94px">ea</span><span class="c k6" style="left:901px;width:94px"><i style="transform:scaleX(0.973)">VAT</i></span><span class="c num k7" style="left:995px;width:94px">15.00</span><span class="c k8" style="left:1089px;width:94px">A</span></div>
</div>
<svg style="left:208px;top:282.5px" width="6" height="9"><path d="M0.2 0.2V8.6L5.4 4.4z" fill="#23252b"/></svg>
<!-- callout -->
<svg style="left:820px;top:98px" width="210" height="116" viewBox="820 98 210 116">
 <g transform="translate(3 3)" fill="#9a9ba3" opacity=".85"><rect x="826.5" y="102" width="191.5" height="61.5" rx="11"/><path d="M892 162H941L858 206z"/></g>
 <g fill="#4169e1"><rect x="826.5" y="102" width="191.5" height="61.5" rx="11"/><path d="M892 162H941L858 206z"/></g>
</svg>
<div class="t" style="left:826px;top:113px;width:192px;text-align:center;color:#fff;font-size:18px;line-height:20.5px;white-space:normal">Service Listing Data<br>frame</div>
<!-- zoom source box and connector lines -->
<svg style="left:0;top:0" width="500" height="300">
 <path d="M12 58L54.5 122M222 58L474 122M12 137L54.5 282" stroke="#4c4d52" stroke-width="0.7" fill="none"/>
 <rect x="12" y="58" width="210" height="79.5" fill="none" stroke="#3c3d42" stroke-width="1.7"/>
</svg>
<!-- magnified popup -->
<div class="abs" id="popup" style="left:54px;top:122px;width:420px;height:160px;background:linear-gradient(#ffffff 0%,#fcfcfd 50%,#f3f3f6 85%,#efeff2 100%);border:1px solid #c8c9ce;box-shadow:0 0 0 1px rgba(255,255,255,.6)"></div>
<div class="abs" style="left:0;top:0;filter:blur(0.7px)">
<svg style="left:56px;top:135px" width="80" height="80"><use href="#iAdd" width="80" height="80"/></svg>
<svg style="left:172px;top:134px" width="80" height="80"><use href="#iEdit" width="80" height="80"/></svg>
<svg style="left:282px;top:135px" width="80" height="80"><use href="#iDel" width="80" height="80"/></svg>
<svg style="left:394px;top:134px" width="80" height="80"><use href="#iView" width="80" height="80"/></svg>
<div class="t pl" style="left:70px;letter-spacing:-0.43px">Add</div>
<div class="t pl" style="left:185px;letter-spacing:0.18px">Edit</div>
<div class="t pl" style="left:280px;letter-spacing:0.02px">Delete</div>
<div class="t pl" style="left:405px;letter-spacing:-0.92px">View</div>
</div>
</body></html>
